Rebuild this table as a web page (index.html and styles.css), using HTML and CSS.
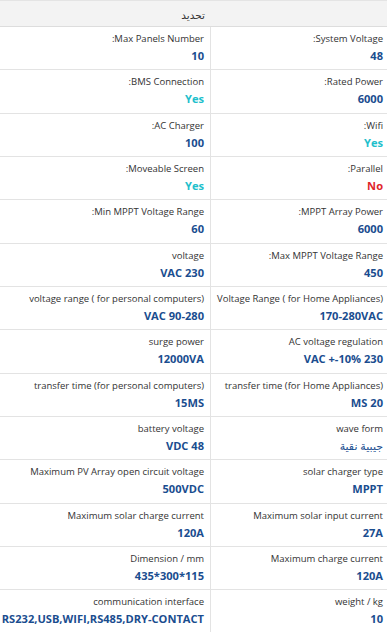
FILE: index.html
```html
<!DOCTYPE html>
<html lang="ar" dir="rtl">
<head>
<meta charset="utf-8">
<title>Specs</title>
<link rel="stylesheet" href="styles.css">
</head>
<body>
<div class="specs">
  <div class="head">
    <div class="hcell"></div>
    <div class="hcell"><span>تحديد</span></div>
  </div>
  <div class="grid">
    <div class="cell"><div class="lbl"><span>:System Voltage</span></div><div class="val"><span>48</span></div></div>
    <div class="cell"><div class="lbl"><span>:Max Panels Number</span></div><div class="val"><span>10</span></div></div>

    <div class="cell"><div class="lbl"><span>:Rated Power</span></div><div class="val"><span>6000</span></div></div>
    <div class="cell"><div class="lbl"><span>:BMS Connection</span></div><div class="val yes"><span>Yes</span></div></div>

    <div class="cell"><div class="lbl"><span>:Wifi</span></div><div class="val yes"><span>Yes</span></div></div>
    <div class="cell"><div class="lbl"><span>:AC Charger</span></div><div class="val"><span>100</span></div></div>

    <div class="cell"><div class="lbl"><span>:Parallel</span></div><div class="val no"><span>No</span></div></div>
    <div class="cell"><div class="lbl"><span>:Moveable Screen</span></div><div class="val yes"><span>Yes</span></div></div>

    <div class="cell"><div class="lbl"><span>:MPPT Array Power</span></div><div class="val"><span>6000</span></div></div>
    <div class="cell"><div class="lbl"><span>:Min MPPT Voltage Range</span></div><div class="val"><span>60</span></div></div>

    <div class="cell"><div class="lbl"><span>:Max MPPT Voltage Range</span></div><div class="val"><span>450</span></div></div>
    <div class="cell"><div class="lbl"><span>voltage</span></div><div class="val"><span>VAC 230</span></div></div>

    <div class="cell"><div class="lbl"><span>Voltage Range ( for Home Appliances)</span></div><div class="val"><span>170-280VAC</span></div></div>
    <div class="cell"><div class="lbl"><span>voltage range ( for personal computers)</span></div><div class="val"><span>VAC 90-280</span></div></div>

    <div class="cell"><div class="lbl"><span>AC voltage regulation</span></div><div class="val"><span>VAC +-10% 230</span></div></div>
    <div class="cell"><div class="lbl"><span>surge power</span></div><div class="val"><span>12000VA</span></div></div>

    <div class="cell"><div class="lbl"><span>transfer time (for Home Appliances)</span></div><div class="val"><span>MS 20</span></div></div>
    <div class="cell"><div class="lbl"><span>transfer time (for personal computers)</span></div><div class="val"><span>15MS</span></div></div>

    <div class="cell"><div class="lbl"><span>wave form</span></div><div class="val ar"><span>جيبية نقية</span></div></div>
    <div class="cell"><div class="lbl"><span>battery voltage</span></div><div class="val"><span>VDC 48</span></div></div>

    <div class="cell"><div class="lbl"><span>solar charger type</span></div><div class="val"><span>MPPT</span></div></div>
    <div class="cell"><div class="lbl"><span>Maximum PV Array open circuit voltage</span></div><div class="val"><span>500VDC</span></div></div>

    <div class="cell"><div class="lbl"><span>Maximum solar input current</span></div><div class="val"><span>27A</span></div></div>
    <div class="cell"><div class="lbl"><span>Maximum solar charge current</span></div><div class="val"><span>120A</span></div></div>

    <div class="cell"><div class="lbl"><span>Maximum charge current</span></div><div class="val"><span>120A</span></div></div>
    <div class="cell"><div class="lbl"><span>Dimension / mm</span></div><div class="val"><span>435*300*115</span></div></div>

    <div class="cell"><div class="lbl"><span>weight / kg</span></div><div class="val"><span>10</span></div></div>
    <div class="cell"><div class="lbl"><span>communication interface</span></div><div class="val"><span>RS232,USB,WIFI,RS485,DRY-CONTACT</span></div></div>
  </div>
</div>
</body>
</html>
```
FILE: styles.css
```css
html, body {
  margin: 0;
  padding: 0;
  background: #ffffff;
}
body {
  font-family: "Open Sans", "Noto Sans", sans-serif;
  color: #333333;
  overflow: hidden;
}
.specs {
  width: 387px;
}
.head {
  display: grid;
  grid-template-columns: 177px 210px;
  height: 25px;
  background: #f3f3f3;
  border-top: 1px solid #e4e4e4;
  border-bottom: 1px solid #dddddd;
}
.hcell {
  display: flex;
  align-items: center;
  justify-content: flex-start;
  padding: 0 5px;
  font-size: 10px;
  color: #333333;
}
.hcell span {
  font-family: "Noto Sans", "DejaVu Sans", sans-serif;
  font-size: 10.5px;
  padding-top: 2px;
}
.grid {
  display: grid;
  grid-template-columns: 177px 210px;
  grid-auto-rows: 43.35px;
}
.cell {
  border-bottom: 1px solid #e3e3e3;
  padding: 5px 4px 0 5px;
  text-align: right;
  white-space: nowrap;
  box-sizing: border-box;
}
.cell:nth-child(odd) {
  border-left: 1px solid #e3e3e3;
}
.cell:nth-child(even) {
  padding-right: 6px;
}
.lbl {
  font-size: 9.5px;
  line-height: 14px;
  color: #333333;
}
.val {
  margin-top: 1px;
  font-size: 11.1px;
  font-weight: 700;
  line-height: 18px;
  color: #1a4d8f;
}
.lbl span, .val span {
  direction: ltr;
  unicode-bidi: isolate;
}
.val.yes {
  color: #1fbfcc;
}
.val.no {
  color: #e0262b;
}
.val.ar {
  font-weight: 400;
  font-size: 11px;
}
.val.ar span {
  font-family: "Noto Sans", "DejaVu Sans", sans-serif;
}
```
